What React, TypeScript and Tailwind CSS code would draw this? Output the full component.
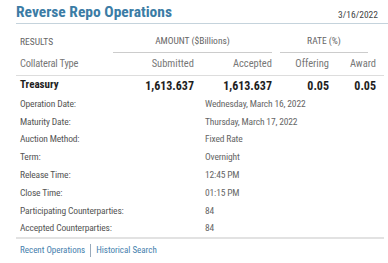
import React from 'react';

const details: [string, string][] = [
  ['Operation Date:', 'Wednesday, March 16, 2022'],
  ['Maturity Date:', 'Thursday, March 17, 2022'],
  ['Auction Method:', 'Fixed Rate'],
  ['Term:', 'Overnight'],
  ['Release Time:', '12:45 PM'],
  ['Close Time:', '01:15 PM'],
  ['Participating Counterparties:', '84'],
  ['Accepted Counterparties:', '84'],
];

export default function App() {
  return (
    <div
      className="w-[388px] h-[263px] bg-white pl-4 overflow-hidden font-stretch-condensed"
      style={{ fontFamily: '"Roboto Condensed", "Roboto", "DejaVu Sans", sans-serif' }}
    >
      <div className="h-6 flex items-end justify-between border-b border-[#c5d3dc]">
        <h1 className="text-[15.5px] leading-[22px] font-bold text-[#3b7ca5]">Reverse Repo Operations</h1>
        <span className="text-[9.5px] leading-[16px] text-[#444] mr-[10px]">3/16/2022</span>
      </div>

      <div className="w-[368px] text-[10.5px] text-[#666]">
        <div className="h-[29px] grid grid-cols-[97px_159px_104px] items-end text-[9.5px]">
          <div className="pl-1 pb-[4px] leading-[14px]">RESULTS</div>
          <div className="text-center border-b border-[#ccc] pb-[4px] leading-[14px]">AMOUNT ($Billions)</div>
          <div className="ml-2 mr-2 text-center border-b border-[#ccc] pb-[4px] leading-[14px]">RATE (%)</div>
        </div>

        <div className="h-[23px] grid grid-cols-[97px_81px_78px_57px_47px_8px] items-center border-b border-[#ddd] text-[#777]">
          <div className="pl-1 tracking-[-0.2px]">Collateral Type</div>
          <div className="text-right">Submitted</div>
          <div className="text-right">Accepted</div>
          <div className="text-right">Offering</div>
          <div className="text-right">Award</div>
          <div />
        </div>

        <div className="h-[19px] grid grid-cols-[97px_81px_78px_57px_47px_8px] items-center text-[12px] font-bold text-[#1e1e1e]">
          <div className="pl-1 text-[11px]">Treasury</div>
          <div className="text-right font-stretch-normal">1,613.637</div>
          <div className="text-right font-stretch-normal">1,613.637</div>
          <div className="text-right font-stretch-normal">0.05</div>
          <div className="text-right font-stretch-normal">0.05</div>
          <div />
        </div>

        <div className="border-b-2 border-[#e2e2e2] text-[9.5px] tracking-[-0.15px]">
          {details.map(([label, value]) => (
            <div key={label} className="h-[17.8px] flex items-center">
              <div className="w-[189px] pl-1 text-[#555]">{label}</div>
              <div className="text-[#666]">{value}</div>
            </div>
          ))}
        </div>

        <div className="h-[22px] flex items-center pl-1 text-[9px] text-[#4580ad]">
          <span>Recent Operations</span>
          <span className="mx-[5px] w-px h-[13px] bg-[#9ab]" />
          <span>Historical Search</span>
        </div>
      </div>
    </div>
  );
}
